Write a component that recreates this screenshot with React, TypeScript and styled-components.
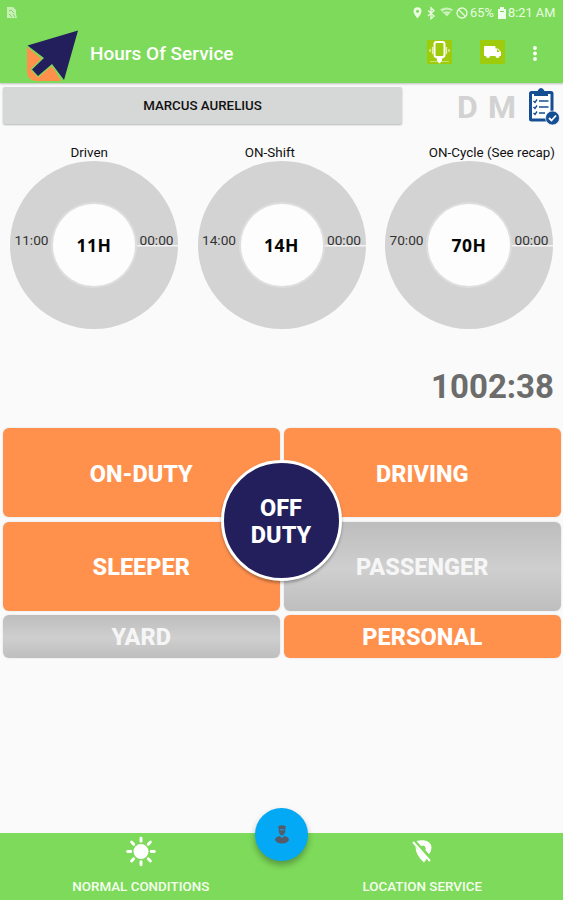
import React from 'react';
import styled, { createGlobalStyle } from 'styled-components';

const GREEN = '#7eda5a';
const ORANGE = '#ff914d';
const NAVY = '#231f5c';

const Global = createGlobalStyle`
  * { box-sizing: border-box; }
  body { margin: 0; background: #fafafa; font-family: Roboto, sans-serif; }
  button { font-family: inherit; border: 0; padding: 0; margin: 0; }
  svg { display: block; flex: none; }
`;

const Screen = styled.div`
  width: 563px;
  height: 900px;
  display: flex;
  flex-direction: column;
  background: #fafafa;
  overflow: hidden;
`;

const Header = styled.header`
  height: 83px;
  flex: none;
  background: ${GREEN};
  box-shadow: 0 1px 2px rgba(0, 0, 0, 0.25);
`;

const StatusBar = styled.div`
  height: 25px;
  display: flex;
  align-items: center;
  justify-content: space-between;
  padding: 0 6px 0 7px;
  color: #e9fbe1;
`;

const StatusGroup = styled.div`
  display: flex;
  align-items: center;
  font-size: 12.8px;
`;

const StatusText = styled.span<{ $width: number }>`
  width: ${(p) => p.$width}px;
  white-space: nowrap;
`;

const Toolbar = styled.div`
  height: 58px;
  display: flex;
  align-items: center;
  padding-left: 26px;
`;

const Title = styled.h1`
  margin: 0 0 1px 11px;
  width: 337px;
  font-size: 19px;
  font-weight: 500;
  color: #fff;
  white-space: nowrap;
`;

const IconTile = styled.button<{ $gap: number }>`
  width: 25px;
  height: 24px;
  flex: none;
  margin: 0 ${(p) => p.$gap}px 4px 0;
  background: #9ecb0b;
`;

const DriverRow = styled.div`
  height: 43px;
  flex: none;
  display: flex;
  padding: 4px 0 0 3px;
`;

const DriverName = styled.button`
  width: 399px;
  height: 37px;
  border-radius: 2px;
  background: #d6d7d7;
  box-shadow: 0 1px 2px rgba(0, 0, 0, 0.28);
  color: #111;
  font-size: 13.3px;
  font-weight: 500;
`;

const Flag = styled.span<{ $left: number; $width: number }>`
  margin-left: ${(p) => p.$left}px;
  width: ${(p) => p.$width}px;
  font-size: 32px;
  line-height: 41px;
  font-weight: 700;
  color: #d2d2d2;
`;

const ReportIcon = styled.svg`
  margin-left: 12px;
`;

const Captions = styled.div`
  height: 34px;
  flex: none;
  display: flex;
  align-items: flex-end;
  justify-content: space-between;
  padding: 0 8px 0 70.5px;
  font-size: 13.4px;
  line-height: 15px;
  color: #111;
  white-space: nowrap;
`;

const Caption = styled.span<{ $shift?: number }>`
  margin-left: ${(p) => p.$shift ?? 0}px;
`;

const Dials = styled.div`
  flex: none;
  display: grid;
  grid-template-columns: repeat(3, 168px);
  column-gap: 19.5px;
  padding: 1px 0 0 10px;
`;

const Dial = styled.div`
  height: 168px;
  border-radius: 50%;
  background: linear-gradient(#f3f3f3, #f3f3f3) 100% 84px / 41px 1.5px no-repeat #d3d3d3;
  display: flex;
  align-items: center;
  justify-content: center;
`;

const DialCore = styled.div`
  width: 82px;
  height: 82px;
  border-radius: 50%;
  background: #fdfdfd;
  box-shadow: 0 0 0 2px #dedede;
  display: flex;
  align-items: center;
  justify-content: center;
  font: 700 17.5px 'Open Sans', sans-serif;
  letter-spacing: 0.5px;
  color: #050505;
`;

const DialSide = styled.div`
  width: 43px;
  height: 26px;
  text-align: center;
  font-size: 13.7px;
  line-height: 17px;
  color: #333;
`;

const Odometer = styled.div`
  height: 98px;
  flex: none;
  padding: 38px 9px 0 0;
  text-align: right;
  font-size: 33px;
  line-height: 40px;
  font-weight: 700;
  color: #6c6c6c;
`;

const DutyPanel = styled.main`
  position: relative;
  flex: none;
  display: grid;
  grid-template-columns: 277.5px 277.5px;
  grid-template-rows: 89px 89px 42.5px;
  gap: 4.5px 3.5px;
  padding: 1px 0 0 2.5px;
`;

const DutyButton = styled.button<{ $off?: boolean }>`
  border-radius: 6px;
  color: ${(p) => (p.$off ? '#f6f6f6' : '#fff')};
  background: ${(p) =>
    p.$off ? 'linear-gradient(#bdbdbd, #cfcfcf 53%, #bebebe)' : ORANGE};
  box-shadow: 0 0 2px rgba(0, 0, 0, 0.14);
  font-size: 23.5px;
  font-weight: 800;
  padding-top: 2px;
`;

const OffDuty = styled.button`
  position: absolute;
  left: 220.5px;
  top: 33px;
  width: 121px;
  height: 121px;
  border-radius: 50%;
  border: 3px solid #fff;
  background: ${NAVY};
  box-shadow: 0 2px 3px rgba(0, 0, 0, 0.3);
  color: #fff;
  font-size: 23.5px;
  line-height: 27px;
  font-weight: 800;
  padding-top: 3px;
`;

const Footer = styled.footer`
  position: relative;
  height: 67px;
  margin-top: auto;
  flex: none;
  display: grid;
  grid-template-columns: 1fr 1fr;
  background: ${GREEN};
`;

const FooterItem = styled.button`
  display: flex;
  flex-direction: column;
  align-items: center;
  gap: 12px;
  padding-top: 3px;
  background: none;
  color: #f5fff0;
  font-size: 13.4px;
  line-height: 15px;
  font-weight: 500;
`;

const ProfileButton = styled.button`
  position: absolute;
  left: 255px;
  top: -25px;
  width: 53px;
  height: 53px;
  border-radius: 50%;
  background: #03a9f4;
  box-shadow: 0 4px 6px rgba(0, 0, 0, 0.3);
  display: flex;
  align-items: center;
  justify-content: center;
`;

const Logo = () => (
  <svg width="53" height="54" viewBox="26 28 53 54">
    <path d="M27 48L54 70L61 82H36Q27 81 27 72Z" fill={ORANGE} />
    <path d="M27.5 46.500L78 31.500L64 81L52 65L38 77L32 70.500L44 59Z" fill={NAVY} stroke={GREEN} strokeWidth="2.500" strokeLinejoin="round" paintOrder="stroke" />
  </svg>
);

const StatusGlyphs = () => (
  <svg width="58" height="14" viewBox="411 5 58 14" fill="none" stroke="#e9fbe1" strokeWidth="1.300">
    <path d="M416.500 17.500C414 14 412.500 12.500 412.500 10.200a4 4 0 0 1 8 0c0 2.300-1.500 3.800-4 7.300z" fill="#e9fbe1" stroke="none" />
    <circle cx="416.500" cy="10.200" r="1.500" fill={GREEN} stroke="none" />
    <path d="M427 9.500l6 5.500-3 2.700V6.800l3 2.700-6 5.500" />
    <path d="M439 8.500q6.500-4 13 0l-6 7z" fill="#c8f2b8" stroke="none" />
    <path d="M442 10.500q4-2 8 0M447 15h4" stroke="#7eda5a" />
    <circle cx="461" cy="12" r="5" />
    <path d="M457.500 8.500l7 7" />
  </svg>
);

const Battery = () => (
  <svg width="11" height="14" viewBox="0 0 11 14">
    <path d="M3 1h4v2h2v10H1V3h2z" fill="#f0ffe9" />
    <path d="M3 5.500h4" stroke={GREEN} />
  </svg>
);

const dials = [
  { left: '11:00', core: '11H' },
  { left: '14:00', core: '14H' },
  { left: '70:00', core: '70H' },
];

const rays = [0, 45, 90, 135, 180, 225, 270, 315];

export default function App() {
  return (
    <Screen>
      <Global />
      <Header>
        <StatusBar>
          <svg width="10" height="12" viewBox="0 0 10 12">
            <path d="M0 0h6l3 3v4l1 4H0z" fill="#c6efb6" />
            <path d="M2 4l2-1 3 3M2 7l3 3M6 7l2 3" stroke={GREEN} fill="none" />
          </svg>
          <StatusGroup>
            <StatusGlyphs />
            <StatusText $width={27}>65%</StatusText>
            <Battery />
            <StatusText $width={49}>8:21 AM</StatusText>
          </StatusGroup>
        </StatusBar>
        <Toolbar>
          <Logo />
          <Title>Hours Of Service</Title>
          <IconTile $gap={28} aria-label="Device">
            <svg width="25" height="24" viewBox="0 0 25 24" fill="none" stroke="#fff">
              <path d="M3 21.500h19" stroke="#c7e36b" />
              <path d="M5.500 7v7M3 9v3M19.500 7v7M22 9v3" stroke="#e4f2af" strokeWidth="1.300" />
              <rect x="7.500" y="2" width="10" height="15" rx="2" strokeWidth="2" />
              <path d="M8 17h9l-2 2v2l-2.500 2.500L10 21v-2z" fill="#fff" stroke="none" />
            </svg>
          </IconTile>
          <IconTile $gap={27} aria-label="Vehicle">
            <svg width="25" height="24" viewBox="0 0 25 24" fill="#fff">
              <path d="M5 6h9.500q1 0 1 1v1.500H18l3 3.500v4H5q-1 0-1-1V7q0-1 1-1z" />
              <circle cx="8" cy="16" r="2" />
              <circle cx="17.500" cy="16" r="2" />
              <path d="M17 9.500h1l1.500 2.500H17z" fill="#9ecb0b" />
            </svg>
          </IconTile>
          <svg width="6" height="18" viewBox="0 0 6 18" fill="#fff">
            <circle cx="3" cy="3" r="1.900" />
            <circle cx="3" cy="8.500" r="1.900" />
            <circle cx="3" cy="14" r="1.900" />
          </svg>
        </Toolbar>
      </Header>

      <DriverRow>
        <DriverName>MARCUS AURELIUS</DriverName>
        <Flag $left={55} $width={31}>D</Flag>
        <Flag $left={0} $width={28}>M</Flag>
        <ReportIcon width="32" height="38" viewBox="528 86 32 38">
          <rect x="530.500" y="91.500" width="21.500" height="27.500" rx="1" fill="#fff" stroke="#164e94" strokeWidth="3" />
          <path d="M534 95v-4q4 0 4-2 3-4 6 0 0 2 4 2v4z" fill="#164e94" />
          <path d="M533.500 100l1.500 1.500 2-3M533.500 106l1.500 1.500 2-3M533.500 112l1.500 1.500 2-3M539 100h9.500M539 106h9.500M539 112h6" fill="none" stroke="#164e94" strokeWidth="1.400" />
          <circle cx="552.500" cy="117" r="7" fill="#164e94" stroke="#fafafa" strokeWidth=".7" />
          <path d="M549 117l2.500 2.500 4.500-5" fill="none" stroke="#fff" strokeWidth="1.800" />
        </ReportIcon>
      </DriverRow>

      <Captions>
        <Caption>Driven</Caption>
        <Caption $shift={3}>ON-Shift</Caption>
        <Caption>ON-Cycle (See recap)</Caption>
      </Captions>
      <Dials>
        {dials.map((d) => (
          <Dial key={d.core}>
            <DialSide>{d.left}</DialSide>
            <DialCore>{d.core}</DialCore>
            <DialSide>00:00</DialSide>
          </Dial>
        ))}
      </Dials>
      <Odometer>1002:38</Odometer>

      <DutyPanel>
        <DutyButton>ON-DUTY</DutyButton>
        <DutyButton>DRIVING</DutyButton>
        <DutyButton>SLEEPER</DutyButton>
        <DutyButton $off>PASSENGER</DutyButton>
        <DutyButton $off>YARD</DutyButton>
        <DutyButton>PERSONAL</DutyButton>
        <OffDuty>OFF<br />DUTY</OffDuty>
      </DutyPanel>

      <Footer>
        <FooterItem>
          <svg width="30" height="31" viewBox="-15 -15.500 30 31">
            <circle r="7.500" fill="#fff" />
            {rays.map((a) => (
              <path key={a} d="M0-10.300V-13.300" transform={`rotate(${a})`} stroke="#fff" strokeWidth="2.900" strokeLinecap="round" />
            ))}
          </svg>
          NORMAL CONDITIONS
        </FooterItem>
        <FooterItem>
          <svg width="28" height="31" viewBox="408 836 28 31">
            <path d="M416.500 841q3-1 7-.8 7.500.5 8 7.500 0 3.500-2.500 6.500l-3.700-4.200a2.800 2.800 0 0 0-4-3.800z" fill="#fff" />
            <path d="M415.500 846.500l11.500 12-3 4q-8.500-7.500-8.500-16z" fill="#fff" />
            <path d="M413 842l17 19" stroke="#fff" strokeWidth="2" />
          </svg>
          LOCATION SERVICE
        </FooterItem>
        <ProfileButton aria-label="Driver profile">
          <svg width="16" height="20" viewBox="0 0 16 20" fill="#535c68">
            <path d="M4 1.500q4-2.500 8 0l-.8 2v3q-1 4-3.200 4t-3.200-4v-3z" />
            <path d="M6 4h4v1.500H6z" fill="#3389b8" />
            <path d="M1 15q0-3 4.500-4l2.500 2 2.500-2q4.500 1 4.500 4-2 3.500-7 3.500T1 15z" />
          </svg>
        </ProfileButton>
      </Footer>
    </Screen>
  );
}
